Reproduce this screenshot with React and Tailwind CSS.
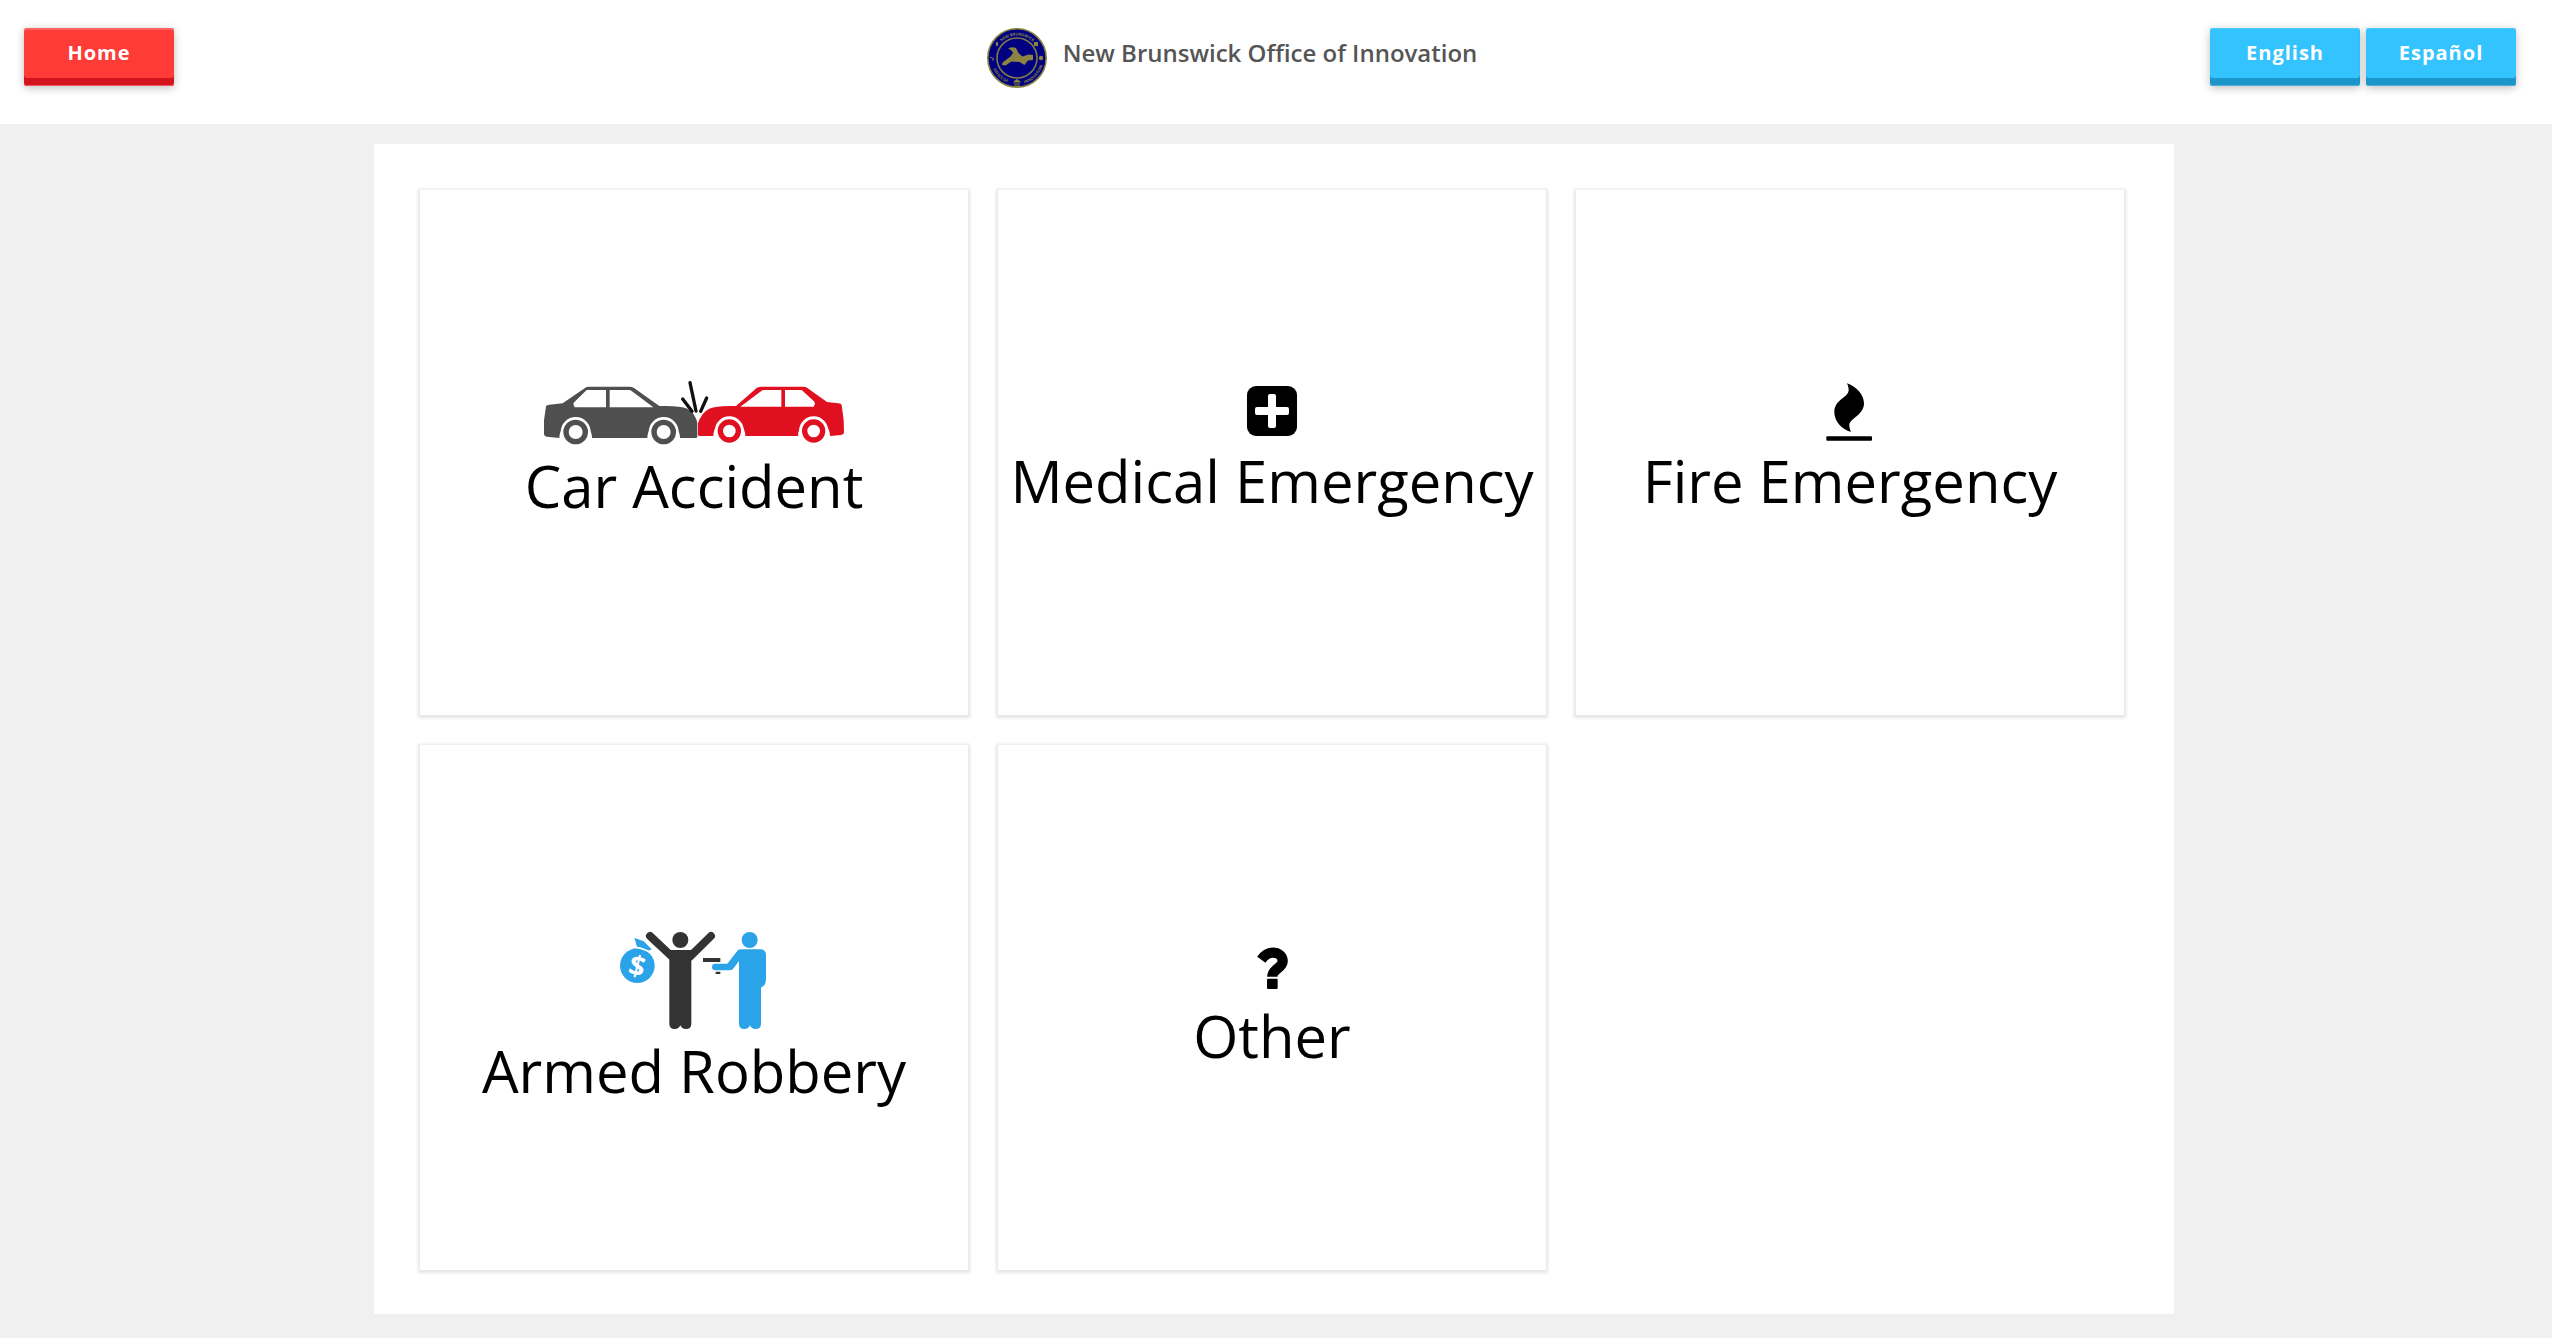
const BUTTON_BASE =
  "h-[58px] w-[150px] rounded-[3px] pb-2 text-xl font-bold tracking-wider text-white";

const NavButton = ({ children, color = "blue" }) => (
  <button
    type="button"
    className={`${BUTTON_BASE} ${
      color === "red"
        ? "bg-[#ff3b38] shadow-[inset_0_2px_0_#ff6260,inset_0_-1px_0_#ee5a60,inset_0_-8px_0_#d3141c,0_2px_8px_rgba(0,0,0,0.25)]"
        : "bg-[#33c3ff] shadow-[inset_0_1px_0_#52ccff,inset_0_-1px_0_#4bb0da,inset_0_-8px_0_#1c95c9,0_2px_8px_rgba(0,0,0,0.25)]"
    }`}
  >
    {children}
  </button>
);

const Seal = () => (
  <svg viewBox="0 0 60 60" className="h-[60px] w-[60px]" aria-hidden="true">
    <circle cx="30" cy="30" r="29.2" fill="#000080" stroke="#8a8440" strokeWidth="1.6" />
    <circle cx="30" cy="30" r="20" fill="none" stroke="#7f7b48" strokeWidth="1.6" />
    <path
      d="M21 20.500q4-2 8-.5l2.500 5 4 3.500 6-2 4.500.5v5l-5 .5-3.500 4.500-5-3-8-.5-6 4-3.500-.5.500-2.500 8-6 2.500-3.500q-1-3-5-4.500z"
      fill="#8a8440"
    />
    <path id="seal-top" d="M7.500 30a22.500 22.500 0 0 1 45 0" fill="none" />
    <path id="seal-bottom" d="M3.500 30a26.500 26.500 0 0 0 53 0" fill="none" />
    <g fill="#8a8440" fontSize="4" fontWeight="700">
      <text textAnchor="middle">
        <textPath href="#seal-top" startOffset="50%">NEW BRUNSWICK</textPath>
      </text>
      <text textAnchor="middle">
        <textPath href="#seal-bottom" startOffset="26%">OFFICE OF</textPath>
      </text>
      <text textAnchor="middle">
        <textPath href="#seal-bottom" startOffset="75%">INNOVATION</textPath>
      </text>
    </g>
    <g fill="#8a8440">
      <path d="M26.500 53.500l3.500-2.500 3.500 2.500v1h-7zM27.500 55h1v3h-1zM29.500 55h1v3h-1zM31.500 55h1v3h-1zM26.500 58h7v1h-7z" />
      <ellipse cx="10" cy="16" rx="1.200" ry="2.200" />
      <rect x="47" y="14" width="4" height="4" />
      <circle cx="54" cy="30" r="2.200" />
      <path d="M3 29l4 2-2 1.500" fill="none" stroke="#8a8440" strokeWidth="1" />
    </g>
  </svg>
);

const CarCrashIcon = () => (
  <svg viewBox="132 54 900 198" className="h-[66px] w-[300px]" aria-hidden="true">
    {/* Left car */}
    <path
      d="M132 178l6-42q2-4 10-5l40-4 68-47q4-3 10-3h122q8 0 14 4l76 54q60-2 84 8 24 12 30 44v40q0 4-6 4h-46a49 49 0 0 0-98 0H276a49 49 0 0 0-98 0l-38-4q-8-1-8-8z"
      fill="#4f4f4f"
    />
    <path d="M220 130q0-5 4-8l36-35h58v52h-94zM329 87h58q5 0 9 4l64 48H329z" fill="#fff" />
    <circle cx="227" cy="213" r="45" fill="#fff" />
    <circle cx="491" cy="213" r="45" fill="#fff" />
    <circle cx="227" cy="213" r="29" fill="#fff" stroke="#4f4f4f" strokeWidth="16" />
    <circle cx="491" cy="213" r="29" fill="#fff" stroke="#4f4f4f" strokeWidth="16" />
    {/* Right car */}
    <path
      d="M1031 178l-6-46q-2-4-10-5l-34-4-60-43q-4-3-10-3H784q-8 0-14 4l-62 54q-56-2-80 8-24 12-34 44v34q0 4 6 4h40a48 48 0 0 1 96 0h158a48 48 0 0 1 96 0l34-3q8-1 8-8z"
      fill="#e01020"
    />
    <path d="M945 128q0-5-4-8l-36-33h-50v50h86zM844 87h-52q-5 0-9 4l-62 46h123z" fill="#fff" />
    <circle cx="688" cy="210" r="44" fill="#fff" />
    <circle cx="941" cy="210" r="44" fill="#fff" />
    <circle cx="688" cy="210" r="27" fill="#fff" stroke="#e01020" strokeWidth="16" />
    <circle cx="941" cy="210" r="27" fill="#fff" stroke="#e01020" strokeWidth="16" />
    {/* Impact lines */}
    <path
      d="M570 65l18 85M548 114l28 37M620 111l-18 40"
      fill="none"
      stroke="#111"
      strokeWidth="10"
      strokeLinecap="round"
    />
  </svg>
);

const MedicalIcon = () => (
  <svg viewBox="0 0 50 56" className="h-14 w-[50px]" aria-hidden="true">
    <rect y="2" width="50" height="50" rx="9" />
    <rect x="8" y="23" width="34" height="8" rx="2" fill="#fff" />
    <rect x="21" y="10" width="8" height="34" rx="2" fill="#fff" />
  </svg>
);

const FireIcon = () => (
  <svg viewBox="678 71 144 168" className="h-14 w-12 overflow-visible" aria-hidden="true">
    <path d="M741 69c30 11 51 35 51 60 0 36-44 45-44 66 0 7 2 13 5 20-28-9-50-31-50-60 0-38 43-43 43-66 0-7-2-13-5-20z" />
    <rect x="679" y="228" width="137" height="13" rx="3" />
  </svg>
);

const RobberyIcon = () => (
  <svg viewBox="480 9 444 381" className="h-[127px] w-[148px]" aria-hidden="true">
    {/* Money bag */}
    <g fill="#2aa3e8">
      <circle cx="532" cy="197" r="52" />
      <path d="M523 114q18 5 28 10l24 24-12 6q-18-8-31-11z" />
    </g>
    <path d="M527 142q28 4 46 17" fill="none" stroke="#fff" strokeWidth="5" />
    <text
      x="531"
      y="228"
      textAnchor="middle"
      fontSize="84"
      fontWeight="700"
      fill="#fff"
      transform="rotate(14 531 200)"
    >
      $
    </text>
    {/* Victim */}
    <g fill="#333">
      <circle cx="661" cy="120" r="24" />
      <path d="M628 150h66v221q0 16-16 16-13 0-17-11-4 11-17 11-16 0-16-16z" />
      <path
        d="M570 108l66 62M753 108l-63 62"
        fill="none"
        stroke="#333"
        strokeWidth="24"
        strokeLinecap="round"
      />
      <path d="M729 174h52v12h-52zM767 215h14v7h-14z" />
    </g>
    {/* Robber */}
    <g fill="#2aa3e8">
      <circle cx="869" cy="120" r="24" />
      <path d="M842 148h58q18 0 18 18v70q0 20-15 27v108q0 16-16 16-13 0-17-11-4 11-17 11-16 0-16-16V183l-15 20q-5 8-14 8h-42q-10 0-10-10t10-10h36l28-36q5-7 12-7z" />
    </g>
  </svg>
);

const OtherIcon = () => (
  <svg viewBox="318 54 96 168" className="h-14 w-8" aria-hidden="true">
    <path
      d="M334 116c10-14 20-21 34-21 17 0 30 10 30 25 0 22-31 22-31 47"
      fill="none"
      stroke="#000"
      strokeWidth="31"
    />
    <rect x="351" y="173" width="32" height="31" rx="3" />
  </svg>
);

const EMERGENCIES = [
  { label: "Car Accident", Icon: CarCrashIcon },
  { label: "Medical Emergency", Icon: MedicalIcon },
  { label: "Fire Emergency", Icon: FireIcon },
  { label: "Armed Robbery", Icon: RobberyIcon },
  { label: "Other", Icon: OtherIcon },
];

const App = () => {
  return (
    <div className="min-h-screen bg-[#f0f0f0] font-['Open_Sans',sans-serif] text-black">
      {/* Header */}
      <header className="grid grid-cols-[1fr_auto_1fr] items-start bg-white pt-7 pr-9 pb-9 pl-6">
        <div>
          <NavButton color="red">Home</NavButton>
        </div>
        <div className="flex gap-4 pr-19">
          <Seal />
          <h1 className="pt-2 text-2xl leading-[34px] font-semibold text-[#555]">
            New Brunswick Office of Innovation
          </h1>
        </div>
        <div className="flex justify-end gap-1.5">
          <NavButton>English</NavButton>
          <NavButton>Español</NavButton>
        </div>
      </header>

      {/* Emergency types */}
      <main className="pt-5 pr-1 pb-6">
        <div className="mx-auto grid max-w-[1800px] grid-cols-3 gap-[30px] bg-white pt-[46px] pr-[50px] pb-11 pl-[46px]">
          {EMERGENCIES.map(({ label, Icon }) => (
            <button
              key={label}
              type="button"
              className="flex min-h-[525px] flex-col items-center justify-center bg-white shadow-[0_1px_3px_2px_rgba(0,0,0,0.1)]"
            >
              <Icon />
              <span className="text-[58px] leading-[82px]">{label}</span>
            </button>
          ))}
        </div>
      </main>
    </div>
  );
};

export default App;
